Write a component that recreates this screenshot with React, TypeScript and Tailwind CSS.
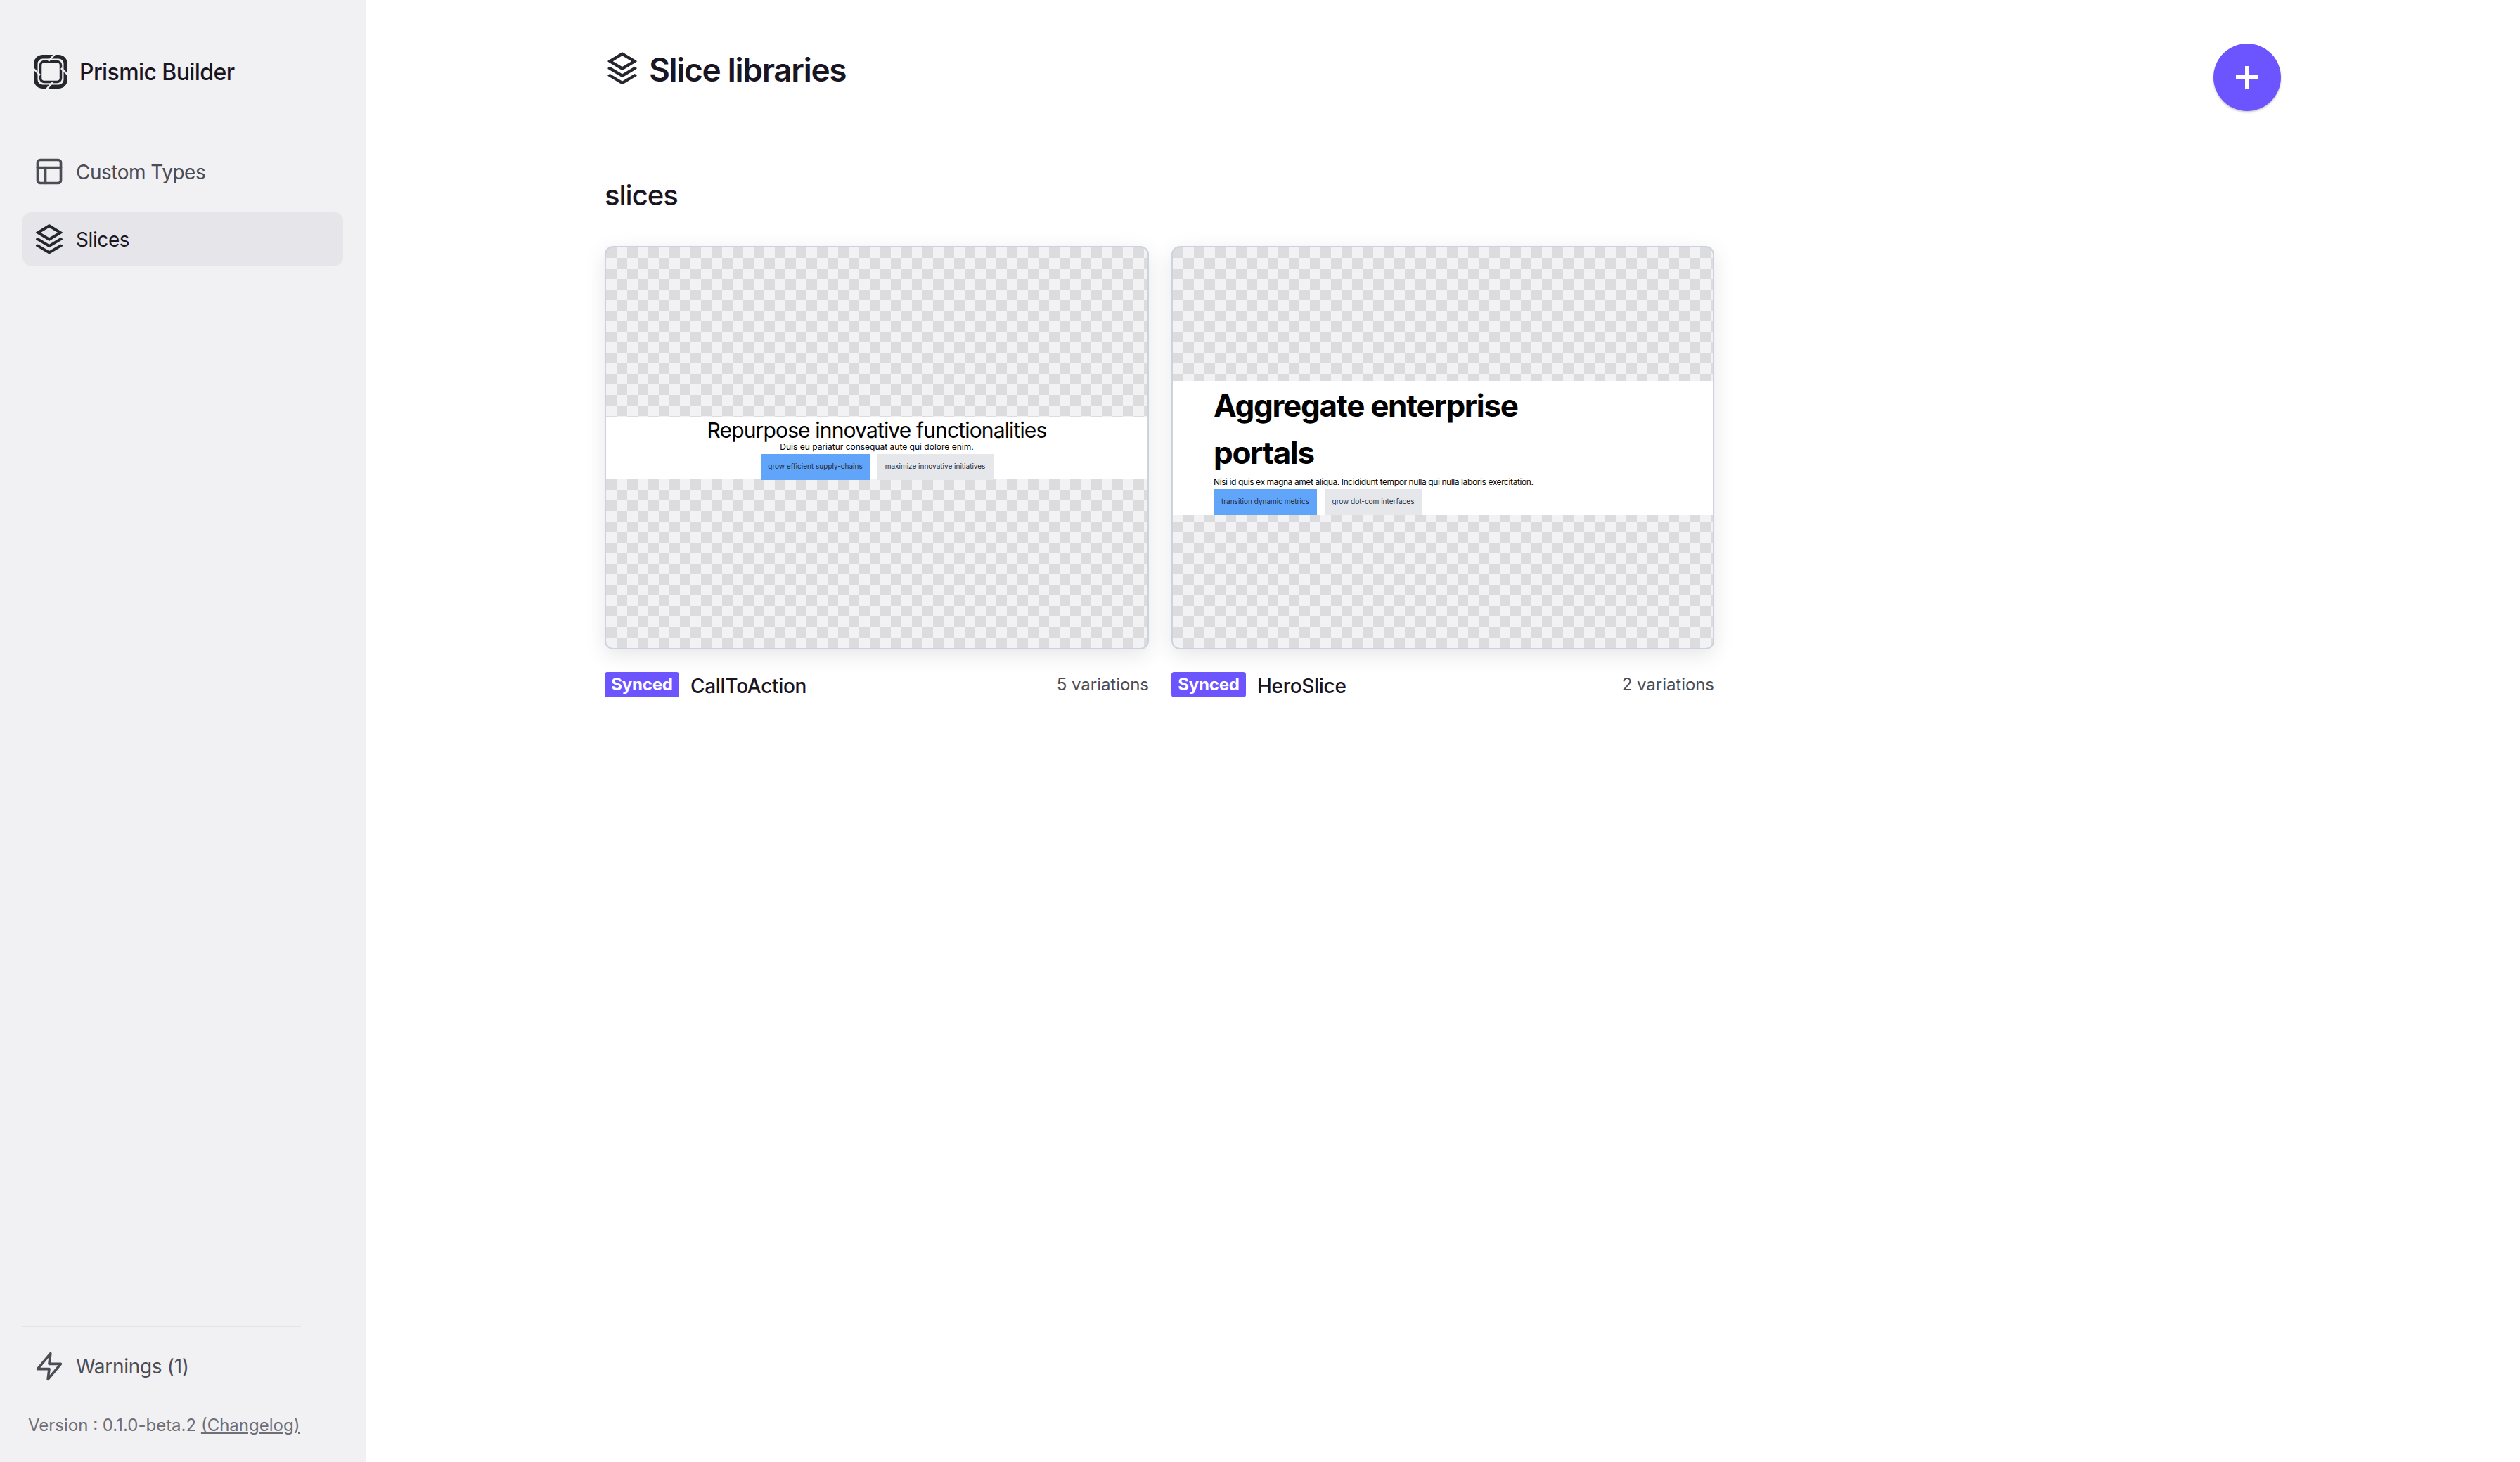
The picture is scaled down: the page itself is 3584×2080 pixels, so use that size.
import React from "react";
import { FiLayout, FiZap } from "react-icons/fi";
import { RiStackLine } from "react-icons/ri";

function Logo() {
  return (
    <svg width="48" height="48" viewBox="0 0 48 48" fill="none" className="shrink-0">
      <rect x="2.75" y="2.75" width="42.5" height="42.5" rx="10" stroke="#26262e" strokeWidth="5.5" />
      <rect x="9.5" y="9.5" width="29" height="29" rx="5.5" stroke="#26262e" strokeWidth="3.5" />
      <g stroke="#f1f1f4" strokeWidth="2.6">
        <path d="M30 -1L21 9" />
        <path d="M18 49L27 39" />
        <path d="M-1 19L9 29" />
        <path d="M49 29L39 19" />
      </g>
    </svg>
  );
}

function Card({ name, count, width, children }: { name: string; count: string; width: string; children: React.ReactNode }) {
  return (
    <div className={width}>
      <div className="h-[574px] rounded-[12px] border-2 border-[#ccd3df] shadow-[0_8px_30px_rgba(0,0,0,0.10)] overflow-hidden flex flex-col justify-center bg-[repeating-conic-gradient(#f2f2f5_0_25%,#dcdcdf_0_50%)] bg-[length:30px_30px]">
        {children}
      </div>
      <div className="mt-[32px] flex items-center justify-between h-[36px]">
        <div className="flex items-center">
          <span className="h-[36px] w-[106px] rounded-[4px] bg-[#6c54ff] text-white text-[24px] font-bold tracking-[-0.2px] flex items-center justify-center">Synced</span>
          <span className="ml-[16px] text-[28px] font-medium tracking-[-0.3px] text-[#1a1523] leading-none mt-[4px]">{name}</span>
        </div>
        <span className="text-[24px] tracking-[-0.05px] text-[#4c4c55] leading-none">{count}</span>
      </div>
    </div>
  );
}

export default function App() {
  return (
    <div className="flex h-screen bg-white font-['Inter',sans-serif] text-[#1a1523] overflow-hidden">
      <aside className="w-[520px] shrink-0 bg-[#f1f1f4] flex flex-col">
        <div className="flex items-center gap-[17px] pl-[48px] pt-[78px] h-[126px]">
          <Logo />
          <span className="text-[32px] font-medium tracking-[-0.6px] leading-none mt-[2px]">Prismic Builder</span>
        </div>
        <nav className="mt-[80px] mx-[32px] w-[456px] flex flex-col gap-[20px]">
          <div className="h-[76px] flex items-center pl-[16px] gap-[16px] text-[28px] tracking-[-0.5px] text-[#4c4c55] rounded-[12px]">
            <FiLayout size={44} strokeWidth={2} className="shrink-0" />
            <span className="mt-[2px]">Custom Types</span>
          </div>
          <div className="h-[76px] flex items-center pl-[14px] gap-[14px] text-[28px] tracking-[-0.4px] text-[#1a1523] bg-[#e5e5ea] rounded-[12px]">
            <RiStackLine size={48} className="shrink-0 text-[#26262e] mt-[2px]" />
            <span className="mt-[2px]">Slices</span>
          </div>
        </nav>
        <div className="mt-auto mx-[32px] w-[396px] pt-[34px] pb-[40px] border-t-2 border-[#e4e4e8]">
          <div className="flex items-center pl-[16px] gap-[16px] h-[44px] text-[28px] tracking-[-0.3px] text-[#4c4c55]">
            <FiZap size={44} strokeWidth={2} className="shrink-0" />
            <span>Warnings (1)</span>
          </div>
          <div className="mt-[50px] pl-[8px] text-[24px] leading-none text-[#6f6e77] whitespace-nowrap">
            Version : 0.1.0-beta.2 <span className="underline">(Changelog)</span>
          </div>
        </div>
      </aside>
      <main className="flex-1 pl-[340px] pr-[340px]">
        <header className="flex items-start justify-between pt-[62px] h-[158px]">
          <div className="flex items-center gap-[12px] mt-[6px] h-[60px] ml-[-1px]">
            <RiStackLine size={52} className="shrink-0 text-[#26262e]" />
            <h1 className="text-[46px] font-semibold tracking-[-1.3px] leading-none mt-[2px]">Slice libraries</h1>
          </div>
          <button className="w-[96px] h-[96px] rounded-full bg-[#6c54ff] shadow-[0_2px_3px_rgba(0,0,0,0.2)] flex items-center justify-center">
            <svg width="32" height="32" viewBox="0 0 32 32" fill="none" stroke="white" strokeWidth="6"><path d="M16 0V32M0 16H32" /></svg>
          </button>
        </header>
        <h2 className="mt-[96px] text-[40px] font-medium tracking-[-1px] leading-[48px]">slices</h2>
        <div className="mt-[48px] flex gap-[32px]">
          <Card name="CallToAction" count="5 variations" width="w-[774px]">
            <div className="bg-white h-[89px] flex flex-col items-center text-black">
              <div className="text-[30px] tracking-[-0.85px] leading-[38px]">Repurpose innovative functionalities</div>
              <div className="text-[12px] leading-[14px] mt-[-2px]">Duis eu pariatur consequat aute qui dolore enim.</div>
              <div className="flex gap-[10px] mt-[3px] text-[10px] text-[#1f2937]">
                <span className="h-[37px] w-[156px] bg-[#60a5fa] flex items-center justify-center pb-[2px]">grow efficient supply-chains</span>
                <span className="h-[37px] w-[165px] bg-[#e5e7eb] flex items-center justify-center pb-[2px]">maximize innovative initiatives</span>
              </div>
            </div>
          </Card>
          <Card name="HeroSlice" count="2 variations" width="w-[772px]">
            <div className="bg-white h-[190px] pl-[58px] text-black">
              <div className="text-[44px] font-bold tracking-[-1.3px] leading-[67px] pt-[2px] w-[480px]">Aggregate enterprise portals</div>
              <div className="text-[12px] tracking-[-0.4px] leading-[14px] pt-[1px]">Nisi id quis ex magna amet aliqua. Incididunt tempor nulla qui nulla laboris exercitation.</div>
              <div className="flex gap-[11px] mt-[2px] text-[10px] text-[#1f2937]">
                <span className="h-[37px] w-[147px] bg-[#60a5fa] flex items-center justify-center">transition dynamic metrics</span>
                <span className="h-[37px] w-[138px] bg-[#e5e7eb] flex items-center justify-center">grow dot-com interfaces</span>
              </div>
            </div>
          </Card>
        </div>
      </main>
    </div>
  );
}
